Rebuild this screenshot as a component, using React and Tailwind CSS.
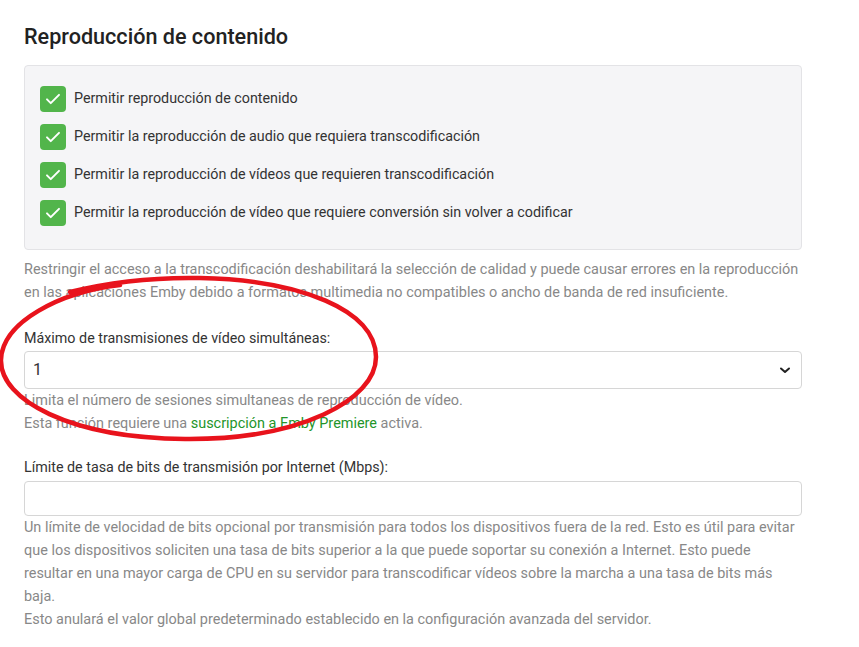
import React from 'react'

const options = [
  'Permitir reproducción de contenido',
  'Permitir la reproducción de audio que requiera transcodificación',
  'Permitir la reproducción de vídeos que requieren transcodificación',
  'Permitir la reproducción de vídeo que requiere conversión sin volver a codificar',
]

const Check = () => (
  <span className="w-[26px] h-[26px] rounded-[4px] bg-[#52b54b] flex items-center justify-center flex-shrink-0">
    <svg width="18" height="18" viewBox="0 0 24 24" fill="none" stroke="white" strokeWidth="2.6" strokeLinecap="round" strokeLinejoin="round">
      <path d="M4 12.5l5 5L20 6.5" />
    </svg>
  </span>
)

export default function App() {
  return (
    <div
      className="relative w-[859px] h-[647px] bg-white overflow-hidden text-[14.3px]"
      style={{ fontFamily: 'Roboto, "Noto Sans", sans-serif' }}
    >
      <div className="w-[778px] ml-6 pt-[23px]">
        <h2 className="text-[21.6px] font-medium text-[#222] leading-[28px]">
          Reproducción de contenido
        </h2>

        {/* CHECKBOXES */}
        <div className="mt-[14px] border border-[#e3e3e6] bg-[#f5f5f7] rounded-[4px] pl-[15px] pt-[20px] pb-[23px] flex flex-col gap-[12px]">
          {options.map((o) => (
            <label key={o} className="flex items-center gap-2 text-[#333] h-[26px]">
              <Check />
              <span>{o}</span>
            </label>
          ))}
        </div>
        <p className="mt-[8px] text-[#888] text-[14.45px] leading-[23px]">
          Restringir el acceso a la transcodificación deshabilitará la selección de calidad y puede causar errores en la reproducción en las aplicaciones Emby debido a formatos multimedia no compatibles o ancho de banda de red insuficiente.
        </p>

        {/* MAX STREAMS */}
        <div className="mt-[24px]">
          <p className="text-[#333] leading-[20px] mb-[3px]">Máximo de transmisiones de vídeo simultáneas:</p>
          <div className="h-[38px] border border-[#d6d6d6] rounded-[4px] bg-white flex items-center justify-between pl-[8px] pr-[10px]">
            <span className="text-[16px] text-[#333]">1</span>
            <svg width="12" height="12" viewBox="0 0 24 24" fill="none" stroke="#222" strokeWidth="4" strokeLinecap="round" strokeLinejoin="round">
              <path d="M4 9l8 7 8-7" />
            </svg>
          </div>
          <p className="text-[#888] text-[14.45px] leading-[23px]">Limita el número de sesiones simultaneas de reproducción de vídeo.</p>
          <p className="text-[#888] text-[14.45px] leading-[23px]">
            Esta función requiere una <span className="text-[#23952a]">suscripción a Emby Premiere</span> activa.
          </p>
        </div>

        {/* BITRATE */}
        <div className="mt-[22px]">
          <p className="text-[#333] leading-[20px] mb-[4px]">Límite de tasa de bits de transmisión por Internet (Mbps):</p>
          <div className="h-[35px] border border-[#d6d6d6] rounded-[4px] bg-white" />
          <p className="text-[#888] text-[14.45px] leading-[23px]">
            Un límite de velocidad de bits opcional por transmisión para todos los dispositivos fuera de la red. Esto es útil para evitar que los dispositivos soliciten una tasa de bits superior a la que puede soportar su conexión a Internet. Esto puede resultar en una mayor carga de CPU en su servidor para transcodificar vídeos sobre la marcha a una tasa de bits más baja.
          </p>
          <p className="text-[#888] text-[14.45px] leading-[23px]">
            Esto anulará el valor global predeterminado establecido en la configuración avanzada del servidor.
          </p>
        </div>
      </div>

      {/* red annotation */}
      <svg className="absolute left-0 top-0 pointer-events-none" width="859" height="647">
        <path
          d="M120 285 C 60 292, 2 322, 1 360 C 0 400, 70 438, 185 439 C 300 440, 376 400, 376 357 C 376 310, 300 280, 200 278 C 150 277, 110 282, 70 292"
          fill="none"
          stroke="#e8131c"
          strokeWidth="4.5"
          strokeLinecap="round"
        />
      </svg>
    </div>
  )
}
